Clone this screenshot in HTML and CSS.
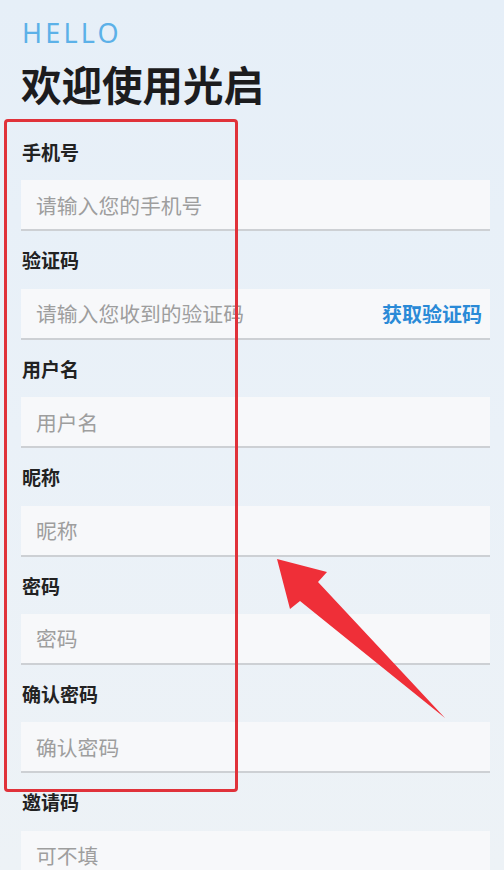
FILE: index.html
```html
<!DOCTYPE html>
<html lang="zh-CN">
<head>
<meta charset="utf-8">
<title>注册</title>
<link rel="stylesheet" href="styles.css">
</head>
<body>
<div class="page">
  <header class="head">
    <div class="hello">HELLO</div>
    <h1 class="title">欢迎使用光启</h1>
  </header>
  <form class="form">
    <div class="field">
      <div class="label">手机号</div>
      <div class="input"><span class="ph">请输入您的手机号</span></div>
    </div>
    <div class="field">
      <div class="label">验证码</div>
      <div class="input"><span class="ph">请输入您收到的验证码</span><span class="code">获取验证码</span></div>
    </div>
    <div class="field">
      <div class="label">用户名</div>
      <div class="input"><span class="ph">用户名</span></div>
    </div>
    <div class="field">
      <div class="label">昵称</div>
      <div class="input"><span class="ph">昵称</span></div>
    </div>
    <div class="field">
      <div class="label">密码</div>
      <div class="input"><span class="ph">密码</span></div>
    </div>
    <div class="field">
      <div class="label">确认密码</div>
      <div class="input"><span class="ph">确认密码</span></div>
    </div>
    <div class="field">
      <div class="label">邀请码</div>
      <div class="input"><span class="ph">可不填</span></div>
    </div>
  </form>
  <div class="highlight"></div>
  <svg class="arrow" width="504" height="870" viewBox="0 0 504 870">
    <polygon points="277,559 327,572 318,582 445,718 300,601 290,609" fill="#ef2f38"/>
  </svg>
</div>
</body>
</html>
```
FILE: styles.css
```css
html, body {
  margin: 0;
  padding: 0;
}
body {
  width: 504px;
  height: 870px;
  overflow: hidden;
  background: linear-gradient(180deg, #e6eff8 0%, #eaf1f8 50%, #edf2f6 100%);
  font-family: "Noto Sans CJK SC", "Noto Sans", sans-serif;
}
.page {
  position: relative;
  padding: 14px 14px 0 21px;
}
.head {
  display: flex;
  flex-direction: column;
}
.hello {
  font-family: "Noto Sans", sans-serif;
  font-size: 27px;
  line-height: 38px;
  letter-spacing: 3.2px;
  color: #5cb1e8;
  font-weight: 400;
  padding-left: 1px;
}
.title {
  margin: 6px 0 0;
  font-size: 40.5px;
  line-height: 52px;
  font-weight: 700;
  color: #1c1c1e;
}
.form {
  display: flex;
  flex-direction: column;
  margin-top: 13px;
}
.field {
  display: flex;
  flex-direction: column;
  padding-top: 16px;
}
.label {
  font-size: 19px;
  line-height: 26px;
  font-weight: 700;
  color: #222;
  padding-left: 1px;
}
.input {
  margin-top: 15.4px;
  height: 49px;
  background: #f7f8fa;
  border-bottom: 2px solid #cdd0d4;
  display: flex;
  align-items: center;
  justify-content: space-between;
  padding: 0 8px 0 15px;
}
.ph {
  font-size: 20.8px;
  color: #9e9e9e;
}
.code {
  font-size: 20px;
  font-weight: 700;
  color: #2a8ad7;
}
.highlight {
  position: absolute;
  left: 4px;
  top: 119px;
  width: 228px;
  height: 667px;
  border: 3px solid #e0323a;
  border-radius: 4px;
}
.arrow {
  position: absolute;
  left: 0;
  top: 0;
}
```
